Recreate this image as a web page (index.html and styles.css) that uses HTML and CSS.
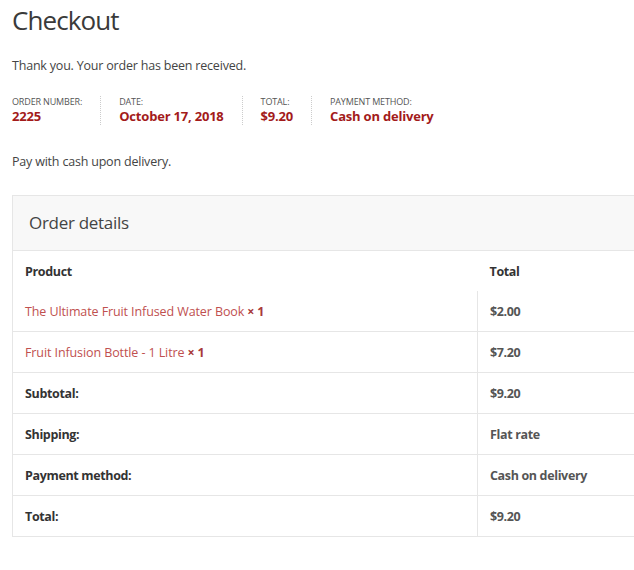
FILE: index.html
```html
<!DOCTYPE html>
<html lang="en">
<head>
<meta charset="utf-8">
<title>Checkout</title>
<link rel="stylesheet" href="styles.css">
</head>
<body>
<div class="page">
  <h1 class="title">Checkout</h1>
  <p class="notice">Thank you. Your order has been received.</p>
  <ul class="overview">
    <li class="ov-item"><span class="ov-label">Order number:</span><strong class="ov-value">2225</strong></li>
    <li class="ov-item"><span class="ov-label">Date:</span><strong class="ov-value">October 17, 2018</strong></li>
    <li class="ov-item"><span class="ov-label">Total:</span><strong class="ov-value">$9.20</strong></li>
    <li class="ov-item"><span class="ov-label">Payment method:</span><strong class="ov-value">Cash on delivery</strong></li>
  </ul>
  <p class="pay-note">Pay with cash upon delivery.</p>
  <section class="details">
    <h2 class="details-title">Order details</h2>
    <table class="details-table">
      <thead>
        <tr><th class="col-product">Product</th><th class="col-total">Total</th></tr>
      </thead>
      <tbody>
        <tr><td class="col-product"><a class="item-link" href="#">The Ultimate Fruit Infused Water Book</a> <strong class="qty">× 1</strong></td><td class="col-total amount">$2.00</td></tr>
        <tr><td class="col-product"><a class="item-link" href="#">Fruit Infusion Bottle - 1 Litre</a> <strong class="qty">× 1</strong></td><td class="col-total amount">$7.20</td></tr>
        <tr><th class="col-product">Subtotal:</th><td class="col-total amount">$9.20</td></tr>
        <tr><th class="col-product">Shipping:</th><td class="col-total amount">Flat rate</td></tr>
        <tr><th class="col-product">Payment method:</th><td class="col-total amount">Cash on delivery</td></tr>
        <tr><th class="col-product">Total:</th><td class="col-total amount">$9.20</td></tr>
      </tbody>
    </table>
  </section>
</div>
</body>
</html>
```
FILE: styles.css
```css
html, body {
  margin: 0;
  padding: 0;
  background: #fff;
  overflow: hidden;
}
body {
  font-family: "Open Sans", "Noto Sans", sans-serif;
  color: #444;
}
.page {
  padding: 0 0 0 12px;
  overflow: hidden;
}
.title {
  margin: 0;
  padding-top: 2px;
  font-size: 26px;
  font-weight: 400;
  line-height: 36px;
  letter-spacing: -0.9px;
  color: #3a3a3a;
}
.notice {
  margin: 18px 0 0;
  font-size: 12.5px;
  line-height: 20px;
  letter-spacing: -0.2px;
  color: #444;
}
.overview {
  list-style: none;
  margin: 20px 0 0;
  padding: 0;
  display: flex;
}
.ov-item {
  display: flex;
  flex-direction: column;
  padding: 0 18px;
  border-right: 1px dotted #ccc;
}
.ov-item:first-child { padding-left: 0; }
.ov-item:last-child { border-right: none; }
.ov-label {
  font-size: 9px;
  line-height: 12px;
  letter-spacing: -0.15px;
  text-transform: uppercase;
  color: #555;
}
.ov-value {
  font-size: 13px;
  line-height: 17px;
  font-weight: 700;
  letter-spacing: -0.2px;
  color: #a31b1b;
}
.pay-note {
  margin: 27px 0 0;
  font-size: 12.5px;
  line-height: 20px;
  letter-spacing: -0.2px;
}
.details {
  margin-top: 23px;
  width: 660px;
  border: 1px solid #e6e6e6;
}
.details-title {
  margin: 0;
  background: #f8f8f8;
  padding: 0 16px;
  height: 54px;
  line-height: 54px;
  font-size: 17px;
  font-weight: 400;
  letter-spacing: -0.3px;
  color: #444;
  border-bottom: 1px solid #e6e6e6;
}
.details-table {
  width: 100%;
  border-collapse: collapse;
  font-size: 12.5px;
  letter-spacing: -0.2px;
}
.details-table th,
.details-table td {
  text-align: left;
  padding: 0 12px;
  height: 40px;
  border-bottom: 1px solid #e6e6e6;
  vertical-align: middle;
}
.details-table tr:last-child th,
.details-table tr:last-child td { border-bottom: none; }
.details-table th { font-weight: 700; color: #333; letter-spacing: -0.35px; }
.col-product { width: 440px; }
.details-table tbody .col-total { border-left: 1px solid #e6e6e6; }
.amount { font-weight: 700; color: #555; letter-spacing: -0.35px; }
.item-link { color: #c0504f; text-decoration: none; letter-spacing: -0.1px; }
.qty { color: #a83a3a; font-weight: 700; }
```
